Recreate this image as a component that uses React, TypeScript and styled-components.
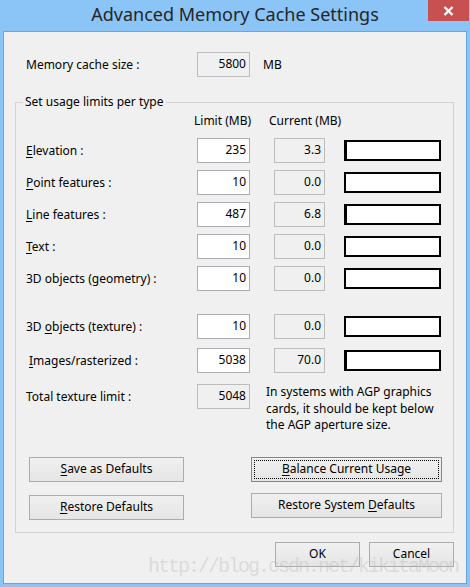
import React from "react";
import styled, { createGlobalStyle } from "styled-components";

const Global = createGlobalStyle`
  html, body { margin: 0; padding: 0; background: #8bc4f6; }
  body { font-family: "Noto Sans", "Open Sans", sans-serif; }
`;

const UI_FONT = `"Noto Sans", "Open Sans", sans-serif`;

const Window = styled.div`
  width: 470px;
  height: 587px;
  box-sizing: border-box;
  background: #8bc4f6;
  display: flex;
  flex-direction: column;
  padding: 0 3px 3px 3px;
  position: relative;
  overflow: hidden;
  font-family: ${UI_FONT};
  font-size: 12px;
  color: #000;
`;

const TitleBar = styled.div`
  height: 31px;
  flex: none;
  position: relative;
  display: flex;
  justify-content: center;
`;

const Title = styled.div`
  font-size: 18px;
  line-height: 28px;
  color: #262626;
  white-space: nowrap;
`;

const CloseButton = styled.div`
  position: absolute;
  top: 0;
  right: -2px;
  width: 41px;
  height: 21px;
  background: #c75050;
  display: flex;
  align-items: center;
  justify-content: center;
`;

const Client = styled.div`
  flex: 1;
  border: 1px solid #6aa6de;
  background: #f0f0f0;
  display: flex;
  flex-direction: column;
`;

const MemoryRow = styled.div`
  display: flex;
  align-items: center;
  height: 25px;
  margin-top: 20px;
  padding-left: 22px;
`;

const Label = styled.div<{ $indent?: number }>`
  width: 171px;
  padding-left: ${(p) => p.$indent ?? 0}px;
  box-sizing: border-box;
  white-space: nowrap;
  line-height: 16px;
`;

const Box = styled.div<{ $editable?: boolean }>`
  width: 53px;
  height: 25px;
  box-sizing: border-box;
  border: 1px solid ${(p) => (p.$editable ? "#abadb3" : "#bcbcbc")};
  background: ${(p) => (p.$editable ? "#fff" : "#f0f0f0")};
  display: flex;
  align-items: center;
  justify-content: flex-end;
  padding: 0 3px 1px 0;
  line-height: 16px;
`;

const CurrentBox = styled(Box)`
  width: 51px;
`;

const Unit = styled.div`
  margin-left: 13px;
`;

const Group = styled.fieldset`
  margin: 17px 12px 0 11px;
  padding: 3px 0 12px 0;
  border: 1px solid #d2d2d2;
  min-width: 0;
`;

const Legend = styled.legend`
  margin-left: 7px;
  padding: 0 2px;
  line-height: 16px;
`;

const HeaderRow = styled.div`
  display: flex;
  height: 16px;
  line-height: 16px;
  padding-left: 178px;
`;

const HeadCell = styled.div<{ $w: number }>`
  width: ${(p) => p.$w}px;
  white-space: nowrap;
`;

const Rows = styled.div`
  display: flex;
  flex-direction: column;
  gap: 7px;
  margin-top: 9px;
`;

const Row = styled.div<{ $extra?: number }>`
  display: grid;
  grid-template-columns: 171px 77px 70px 97px;
  grid-auto-rows: 25px;
  align-items: center;
  padding-left: 10px;
  margin-top: ${(p) => p.$extra ?? 0}px;
`;

const Progress = styled.div`
  width: 97px;
  height: 21px;
  box-sizing: border-box;
  border: 2px solid #000;
  background: #fff;
  display: flex;
`;

const ProgressFill = styled.div`
  background: #000;
  height: 100%;
`;

const Note = styled.div`
  grid-column: 3 / 5;
  align-self: start;
  margin-left: -8px;
  line-height: 16.5px;
  white-space: nowrap;
`;

const ButtonArea = styled.div`
  display: flex;
  margin-top: 48px;
  padding-left: 13px;
`;

const ButtonCol = styled.div<{ $gap: number; $w: number; $ml?: number }>`
  display: flex;
  flex-direction: column;
  gap: ${(p) => p.$gap}px;
  width: ${(p) => p.$w}px;
  margin-left: ${(p) => p.$ml ?? 0}px;
`;

const Button = styled.div<{ $w?: number; $focused?: boolean }>`
  width: ${(p) => (p.$w ? `${p.$w}px` : "100%")};
  height: 25px;
  box-sizing: border-box;
  border: 1px solid ${(p) => (p.$focused ? "#3399ff" : "#acacac")};
  background: linear-gradient(#f0f0f0, #e5e5e5);
  display: flex;
  align-items: center;
  justify-content: center;
  line-height: 16px;
  padding-bottom: 1px;
  white-space: nowrap;
  outline: ${(p) => (p.$focused ? "1px dotted #000" : "none")};
  outline-offset: -4px;
`;

const ButtonText = styled.span`
  white-space: pre;
`;

const Footer = styled.div`
  display: flex;
  justify-content: flex-end;
  gap: 9px;
  margin: 9px 12px 0 0;
`;

const Key = styled.span`
  text-decoration: underline;
  text-underline-offset: 2px;
`;

const Watermark = styled.div`
  position: absolute;
  left: 148px;
  top: 555px;
  font-family: "Liberation Mono", monospace;
  font-size: 20px;
  letter-spacing: -2px;
  line-height: 24px;
  color: rgba(185, 185, 185, 0.4);
  white-space: nowrap;
  pointer-events: none;
`;

type RowData = {
  label: React.ReactNode;
  limit: string;
  current: string;
  fill: number;
  extra?: number;
  indent?: number;
};

const rows: RowData[] = [
  { label: <><Key>E</Key>levation :</>, limit: "235", current: "3.3", fill: 1 },
  { label: <><Key>P</Key>oint features :</>, limit: "10", current: "0.0", fill: 0 },
  { label: <><Key>L</Key>ine features :</>, limit: "487", current: "6.8", fill: 1 },
  { label: <><Key>T</Key>ext :</>, limit: "10", current: "0.0", fill: 0 },
  { label: <>3D objects (<Key>g</Key>eometry) :</>, limit: "10", current: "0.0", fill: 0 },
  { label: <>3D <Key>o</Key>bjects (texture) :</>, limit: "10", current: "0.0", fill: 0, extra: 16 },
  { label: <><Key>I</Key>mages/rasterized :</>, limit: "5038", current: "70.0", fill: 1, extra: 2, indent: 3 },
];

export default function App() {
  return (
    <>
      <Global />
      <Window>
        <TitleBar>
          <Title>Advanced Memory Cache Settings</Title>
          <CloseButton>
            <svg width="11" height="10" viewBox="0 0 11 10">
              <path d="M1.5 1 L9.5 9 M9.5 1 L1.5 9" stroke="#fff" strokeWidth="2.4" />
            </svg>
          </CloseButton>
        </TitleBar>
        <Client>
          <MemoryRow>
            <Label>Memory cache size :</Label>
            <Box>5800</Box>
            <Unit>MB</Unit>
          </MemoryRow>
          <Group>
            <Legend>Set usage limits per type</Legend>
            <HeaderRow>
              <HeadCell $w={75}>Limit (MB)</HeadCell>
              <HeadCell $w={80}>Current (MB)</HeadCell>
            </HeaderRow>
            <Rows>
              {rows.map((r, i) => (
                <Row key={i} $extra={r.extra}>
                  <Label $indent={r.indent}>{r.label}</Label>
                  <Box $editable>{r.limit}</Box>
                  <CurrentBox>{r.current}</CurrentBox>
                  <Progress>
                    <ProgressFill style={{ width: `${r.fill}px` }} />
                  </Progress>
                </Row>
              ))}
              <Row $extra={4}>
                <Label>Total texture limit :</Label>
                <Box>5048</Box>
                <Note>
                  In systems with AGP graphics
                  <br />
                  cards, it should be kept below
                  <br />
                  the AGP aperture size.
                </Note>
              </Row>
            </Rows>
            <ButtonArea>
              <ButtonCol $gap={13} $w={155}>
                <Button><ButtonText><Key>S</Key>ave as Defaults</ButtonText></Button>
                <Button><ButtonText><Key>R</Key>estore Defaults</ButtonText></Button>
              </ButtonCol>
              <ButtonCol $gap={11} $w={191} $ml={67}>
                <Button $focused><ButtonText><Key>B</Key>alance Current Usage</ButtonText></Button>
                <Button><ButtonText>Restore System <Key>D</Key>efaults</ButtonText></Button>
              </ButtonCol>
            </ButtonArea>
          </Group>
          <Footer>
            <Button $w={85}><ButtonText>OK</ButtonText></Button>
            <Button $w={85}><ButtonText>Cancel</ButtonText></Button>
          </Footer>
        </Client>
        <Watermark>http://blog.csdn.net/kikitaMoon</Watermark>
      </Window>
    </>
  );
}
